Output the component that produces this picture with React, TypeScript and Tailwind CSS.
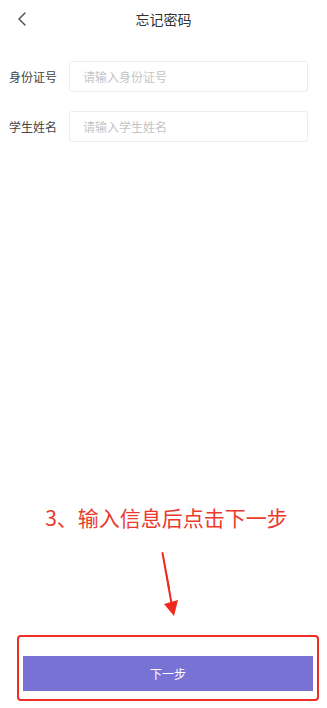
import { ChevronLeft } from 'lucide-react';

const font = { fontFamily: '"Noto Sans CJK SC", "Liberation Sans", sans-serif' };

export default function App() {
  return (
    <div className="relative w-[327px] h-[708px] bg-white flex flex-col overflow-hidden" style={font}>
      {/* Header */}
      <div className="relative h-[38px] flex items-center justify-center">
        <ChevronLeft className="absolute left-[10px] top-[7px] w-[24px] h-[24px] text-[#555]" strokeWidth={1.5} />
        <span className="text-[14px] text-[#333]">忘记密码</span>
      </div>

      {/* Form */}
      <div className="flex flex-col gap-[19px] mt-[23px] pl-[9px] pr-[19px]">
        <div className="flex items-center">
          <span className="w-[60px] text-[12px] text-[#444]">身份证号</span>
          <div className="flex-1 h-[31px] border border-[#ececec] rounded-[3px] flex items-center pl-[13px] text-[12px] text-[#c4c4c4]">
            请输入身份证号
          </div>
        </div>
        <div className="flex items-center">
          <span className="w-[60px] text-[12px] text-[#444]">学生姓名</span>
          <div className="flex-1 h-[31px] border border-[#ececec] rounded-[3px] flex items-center pl-[13px] text-[12px] text-[#c4c4c4]">
            请输入学生姓名
          </div>
        </div>
      </div>

      {/* Bottom button */}
      <div className="mt-auto px-[23px] pb-[17px] pr-[14px]">
        <div className="h-[35px] bg-[#7872d5] flex items-center justify-center text-white text-[12px]">
          下一步
        </div>
      </div>

      {/* Annotation overlays */}
      <div className="absolute left-[6px] right-0 top-[503px] text-center text-[21px] leading-[28px] text-[#ea3a2e]">
        3、输入信息后点击下一步
      </div>
      <svg className="absolute left-[150px] top-[548px]" width="40" height="75" viewBox="0 0 40 75">
        <path d="M12.5 5 L22 58" stroke="#ee2a1e" strokeWidth="2" strokeLinecap="round" fill="none" />
        <path d="M14 56 L24 68 L28 52 Z" fill="#ee2a1e" />
        <path d="M13 6 L18 40 L20 40 Z" fill="#ee2a1e" />
      </svg>
      <div className="absolute left-[17px] top-[635px] w-[302px] h-[66px] border-2 border-[#ee2d24] rounded-[4px]" />
    </div>
  );
}
